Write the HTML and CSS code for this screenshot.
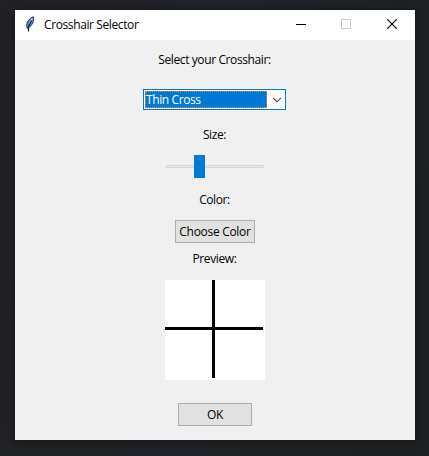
FILE: index.html
```
<!DOCTYPE html>
<html lang="en">
<head>
<meta charset="utf-8">
<title>Crosshair Selector</title>
<link rel="stylesheet" href="styles.css">
</head>
<body>
<main class="window">
  <header class="titlebar">
    <svg class="feather" width="16" height="16" viewBox="0 0 16 16">
      <path d="M4.4 12.5C2.1 9 5.1 2.5 10.3.8C11.6 4.5 9.6 9.5 4.4 12.5Z" fill="#4b8be0" stroke="#34383e"/>
      <path d="M9.1 2.5L6.6 7.5" stroke="#a9d0fa" stroke-width="1.3"/>
      <path d="M8.6 4.5L5.8 10L5.4 15.5" fill="none" stroke="#111820" stroke-width="1.1"/>
    </svg>
    <h1 class="title">Crosshair Selector</h1>
    <div class="controls">
      <svg class="minimize" width="10" height="10" shape-rendering="crispEdges"><path d="M0 5.5H10" stroke="#000"/></svg>
      <svg class="maximize" width="10" height="10" shape-rendering="crispEdges"><rect x=".5" y=".5" width="9" height="9" fill="none" stroke="#ccc"/></svg>
      <svg width="10" height="10"><path d="M.3.3L9.7 9.7M9.7.3L.3 9.7" stroke="#000" stroke-width="1.15"/></svg>
    </div>
  </header>
  <section class="content">
    <div class="label">Select your Crosshair:</div>
    <div class="combo">
      <div class="selection">Thin Cross</div>
      <svg class="chevron" width="10" height="6"><path d="M1 .8L5 4.8L9 .8" fill="none" stroke="#444" stroke-width="1.15"/></svg>
    </div>
    <div class="label size-label">Size:</div>
    <div class="slider"><div class="track"></div><div class="thumb"></div></div>
    <div class="label color-label">Color:</div>
    <button class="button choose">Choose Color</button>
    <div class="label preview-label">Preview:</div>
    <svg class="preview" width="100" height="100" shape-rendering="crispEdges">
      <path d="M48.5 0V98M0 48.5H98" stroke="#000" stroke-width="3"/>
    </svg>
    <button class="button ok">OK</button>
  </section>
</main>
</body>
</html>
```
FILE: styles.css
```
* { box-sizing: border-box; }
body {
  margin: 0;
  height: 456px;
  padding: 10px 14px 16px 15px;
  background: linear-gradient(100deg, #212226, #202428 55%, #1e2022);
  font: 12px/16px "Open Sans", "Noto Sans", sans-serif;
  letter-spacing: -.39px;
  color: #000;
  overflow: hidden;
}
.window {
  width: 400px;
  height: 430px;
  background: #f0f0f0;
  box-shadow: 0 0 0 1px #1b1b1d, 0 2px 10px #111a;
}
.titlebar {
  height: 30px;
  display: flex;
  align-items: center;
  padding: 0 18px 0 8px;
  background: #fff;
}
.feather { margin-top: -2px; }
.title { margin: 0 0 0 5px; font-size: 12px; font-weight: 400; line-height: 16px; white-space: nowrap; }
.controls { margin-left: auto; display: flex; margin-top: -2px; }
.controls svg { display: block; }
.minimize { margin-right: 35px; }
.maximize { margin-right: 36px; }
.content { display: flex; flex-direction: column; align-items: center; padding-top: 12px; }
.label { height: 16px; padding-right: 1px; white-space: nowrap; }
.combo {
  width: 143px;
  height: 21px;
  margin: 21px 1px 0 0;
  padding: 1px 3px 1px 1px;
  display: flex;
  align-items: center;
  border: 1px solid #0078d7;
  background: #fff;
}
.selection {
  width: 122px;
  height: 17px;
  border: 1px dotted #ff8728;
  background: #0078d7;
  color: #fff;
  line-height: 15px;
  white-space: nowrap;
}
.chevron { margin-left: 5px; }
.size-label { margin-top: 17px; }
.slider { width: 98px; height: 23px; margin-top: 12px; display: grid; align-items: center; }
.track, .thumb { grid-area: 1 / 1; }
.track { height: 3px; border: 1px solid #d6d6d6; background: #e7eaea; }
.thumb { width: 11px; height: 23px; margin-left: 28px; background: #007ad9; }
.color-label { margin-top: 14px; }
.button {
  height: 23px;
  padding: 0;
  border: 1px solid #adadad;
  background: #e1e1e1;
  color: #000;
  font: inherit;
  letter-spacing: -.3px;
  white-space: nowrap;
  display: flex;
  align-items: center;
  justify-content: center;
}
.choose { width: 80px; margin-top: 12px; }
.preview-label { margin-top: 8px; }
.preview { margin-top: 13px; background: #fff; }
.ok { width: 74px; margin-top: 23px; }
```
